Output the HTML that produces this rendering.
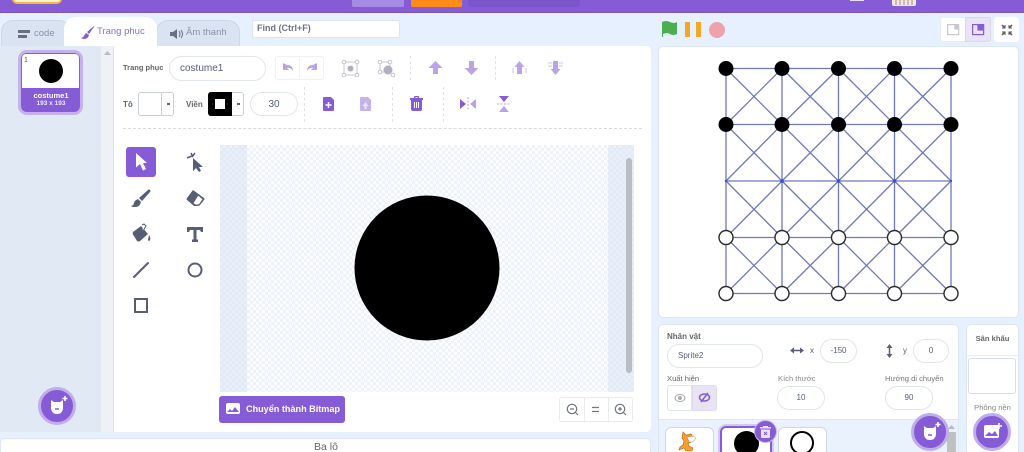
<!DOCTYPE html>
<html><head><meta charset="utf-8"><style>
html,body{margin:0;padding:0;width:1024px;height:452px;overflow:hidden;background:#e6f0ff}
#p{position:relative;width:1024px;height:452px;overflow:hidden;background:#e6f0ff;font-family:"Liberation Sans","Noto Sans CJK SC",sans-serif;color:#575e75}
.a{position:absolute;box-sizing:border-box}
.t{position:absolute;white-space:nowrap;line-height:1}
.inp{position:absolute;box-sizing:border-box;background:#fff;border:1px solid #e1e5ec;border-radius:16px;text-align:center;color:#575e75}
svg{position:absolute;overflow:visible}
</style></head><body><div id="p">
<div class="a" style="left:0;top:0;width:1024px;height:13px;background:#855cd6;border-bottom:1px solid #7a54c6"></div>
<div class="a" style="left:12px;top:-6px;width:50px;height:10px;background:#fff3d0;border:2px solid #f5b83c;border-radius:5px"></div>
<div class="a" style="left:352px;top:0;width:52px;height:7px;background:#a78ae2;border-radius:0 0 2px 2px"></div>
<div class="a" style="left:411px;top:0;width:51px;height:7px;background:#ff8c1a;border-radius:0 0 2px 2px"></div>
<div class="a" style="left:468px;top:0;width:112px;height:7px;background:#7d55cb;border-radius:0 0 3px 3px"></div>
<div class="a" style="left:892px;top:0;width:24px;height:6px;background:#f4e9e0;border-radius:0 0 2px 2px"></div>
<svg style="left:892px;top:0" width="24" height="6"><path d="M4 0v5M8 0v5M12 0v5M16 0v5M20 0v5" stroke="#a08a90"/></svg>
<div class="a" style="left:850px;top:0;width:14px;height:1px;background:#e8e0f8"></div>

<!-- tabs -->
<div class="a" style="left:1px;top:20px;width:70px;height:27px;background:#d9e3f2;border:1px solid #ccd8ea;border-radius:12px 12px 0 0"></div>
<div class="a" style="left:156px;top:20px;width:84px;height:27px;background:#d9e3f2;border:1px solid #ccd8ea;border-radius:12px 12px 0 0"></div>
<div class="a" style="left:64px;top:17px;width:93px;height:30px;background:#fff;border-radius:12px 12px 0 0"></div>
<svg style="left:18px;top:30px" width="13" height="9"><path d="M0 0h12v3H0zM0 5h9v3H0z" fill="#6a7080"/></svg>
<div class="t" style="left:34px;top:29px;font-size:9.500px;color:#8a92a5">code</div>
<svg style="left:81px;top:26px" width="14" height="14"><path d="M13 0L6 6l2 2 5-7zM5 7C3 8 4 11 0 12c3 2 7 1 8-3z" fill="#855cd6"/></svg>
<div class="t" style="left:97px;top:27px;font-size:9.500px;color:#8a6ed0">Trang phục</div>
<svg style="left:170px;top:29px" width="13" height="10"><path d="M0 3h3l4-3v10L3 7H0z" fill="#6a7080"/><path d="M9 2q2 3 0 6M11 1q3 4 0 8" stroke="#6a7080" fill="none"/></svg>
<div class="t" style="left:186px;top:28px;font-size:9.500px;color:#8a92a5">Âm thanh</div>
<div class="a" style="left:252px;top:20px;width:148px;height:18px;background:#fff;border:1px solid #dbe3ef;border-radius:2px"></div>
<div class="t" style="left:257px;top:24px;font-size:9px;font-weight:bold;color:#6b7285">Find (Ctrl+F)</div>

<!-- selector -->
<div class="a" style="left:0;top:46px;width:101px;height:386px;background:#e1e9f5"></div>
<div class="a" style="left:101px;top:46px;width:13px;height:386px;background:#eef1f6;border-right:1px solid #dde3ec"></div>
<svg style="left:104px;top:51px" width="7" height="5"><path d="M3.500 0L7 4H0z" fill="#b5bac4"/></svg>
<div class="a" style="left:18px;top:50px;width:65px;height:65px;background:#855cd6;border:3px solid #c5b2ec;border-radius:9px"></div>
<div class="a" style="left:22px;top:54px;width:57px;height:34px;background:#fff;border-radius:4px 4px 0 0"></div>
<div class="a" style="left:39px;top:59px;width:24px;height:24px;background:#000;border-radius:50%"></div>
<div class="t" style="left:24px;top:57px;font-size:7px;color:#555">1</div>
<div class="t" style="left:21px;top:92px;width:60px;text-align:center;font-size:7.500px;color:#fff;font-weight:bold">costume1</div>
<div class="t" style="left:21px;top:101px;width:60px;text-align:center;font-size:6.500px;color:#efe9fb;font-weight:bold">193 x 193</div>
<div class="a" style="left:38px;top:387px;width:38px;height:38px;background:#855cd6;border:3px solid #c0ade9;border-radius:50%"></div>
<svg style="left:50px;top:397px" width="24" height="20"><path d="M1 3l3 2h6l3-2v9q-1 5-6 5t-6-5z" fill="#fff"/><path d="M15-1v5M12.500 1.500h5" stroke="#fff" stroke-width="1.600"/><path d="M5 12h4" stroke="#855cd6" stroke-width="1.500"/></svg>

<!-- editor -->
<div class="a" style="left:114px;top:46px;width:537px;height:386px;background:#fff;border-radius:0 5px 5px 0"></div>
<div class="t" style="left:123px;top:64px;font-size:7.500px;font-weight:bold;color:#666">Trang phục</div>
<div class="inp" style="left:169px;top:56px;width:97px;height:25px;font-size:10px;line-height:23px;text-align:left;padding-left:10px">costume1</div>
<div class="a" style="left:275px;top:56px;width:49px;height:24px;border:1px solid #eef0f4;border-radius:3px"></div>
<div class="a" style="left:299px;top:56px;width:1px;height:24px;background:#eef0f4"></div>
<svg style="left:282px;top:63px" width="36" height="10"><path d="M1 0v7h6L5 5q3-1 6 3 0-6-6-6z" fill="#b9a5e6"/><path d="M35 0v7h-6l2-2q-3-1-6 3 0-6 6-6z" fill="#b9a5e6"/></svg>
<svg style="left:342px;top:60px" width="18" height="17" fill="none" stroke="#c4c4d2"><rect x="2" y="2" width="13" height="13"/><g fill="#fff"><circle cx="2" cy="2" r="1.800"/><circle cx="15" cy="2" r="1.800"/><circle cx="2" cy="15" r="1.800"/><circle cx="15" cy="15" r="1.800"/></g><circle cx="8.500" cy="8.500" r="3" fill="#b0b0c0" stroke="none"/></svg>
<svg style="left:378px;top:60px" width="18" height="17" fill="none" stroke="#c4c4d2"><path d="M2 2h10v4M2 2v10h4"/><circle cx="2" cy="2" r="1.800" fill="#fff"/><circle cx="12" cy="2" r="1.800" fill="#fff"/><circle cx="2" cy="12" r="1.800" fill="#fff"/><circle cx="15" cy="15" r="1.800" fill="#fff"/><circle cx="10" cy="10" r="4.500" fill="#b0b0c0" stroke="none"/></svg>
<div class="a" style="left:410px;top:56px;height:24px;border-left:1px dashed #e2e2e2"></div>
<div class="a" style="left:495px;top:56px;height:24px;border-left:1px dashed #e2e2e2"></div>
<svg style="left:428px;top:61px" width="15" height="14"><path d="M7.500 0l7 7H10v6H5V7H.5z" fill="#b9a5e6"/></svg>
<svg style="left:464px;top:61px" width="15" height="14"><path d="M7.500 14l-7-7H5V0h5v7h4.500z" fill="#b9a5e6"/></svg>
<svg style="left:512px;top:61px" width="15" height="14"><path d="M7.500 0l5 6H10v7H5V6H2.500z" fill="#b9a5e6"/><path d="M1 7v5M14 7v5" stroke="#cfc2ee"/></svg>
<svg style="left:548px;top:61px" width="15" height="14"><path d="M7.500 14l-5-6H5V0h5v8h2.500z" fill="#b9a5e6"/><path d="M0 2h4M0 5h4M11 2h4M11 5h4" stroke="#cfc2ee"/></svg>

<div class="t" style="left:123px;top:101px;font-size:8px;font-weight:bold;color:#666">Tô</div>
<div class="a" style="left:138px;top:92px;width:36px;height:24px;background:#fff;border:1px solid #c9ced8;border-radius:3px"></div>
<div class="a" style="left:161px;top:92px;width:1px;height:24px;background:#c9ced8"></div>
<div class="a" style="left:167px;top:103px;width:3px;height:2px;background:#666"></div>
<div class="t" style="left:186px;top:101px;font-size:8px;font-weight:bold;color:#666">Viền</div>
<div class="a" style="left:208px;top:92px;width:36px;height:24px;background:#fff;border:1px solid #c9ced8;border-radius:3px"></div>
<div class="a" style="left:208px;top:92px;width:24px;height:24px;background:#000;border-radius:3px 0 0 3px"></div>
<div class="a" style="left:215px;top:99px;width:10px;height:10px;background:#fff"></div>
<div class="a" style="left:237px;top:103px;width:3px;height:2px;background:#666"></div>
<div class="inp" style="left:250px;top:92px;width:48px;height:24px;font-size:10px;line-height:23px">30</div>
<div class="a" style="left:304px;top:87px;height:35px;border-left:1px dashed #e2e2e2"></div>
<div class="a" style="left:392px;top:87px;height:35px;border-left:1px dashed #e2e2e2"></div>
<div class="a" style="left:443px;top:87px;height:35px;border-left:1px dashed #e2e2e2"></div>
<svg style="left:323px;top:97px" width="12" height="14"><path d="M1 0h7l3 3v10q0 1-1 1H1q-1 0-1-1V1q0-1 1-1z" fill="#855cd6"/><path d="M5.500 5v6M2.500 8h6" stroke="#fff" stroke-width="1.500"/></svg>
<svg style="left:360px;top:97px" width="12" height="14"><path d="M1 0h7l3 3v10q0 1-1 1H1q-1 0-1-1V1q0-1 1-1z" fill="#c3b2ec"/><path d="M5.500 5l3 4-2 .5V12h-2V9.500l-2-.5z" fill="#fff" opacity=".6"/></svg>
<svg style="left:410px;top:96px" width="13" height="15"><path d="M4 2V1q0-1 1-1h3q1 0 1 1v1h4v2h-1v9q0 2-2 2H3q-2 0-2-2V4H0V2zm1.500 0h2V1h-2z" fill="#855cd6"/><path d="M4.500 6v6M6.500 6v6M8.500 6v6" stroke="#fff"/></svg>
<svg style="left:460px;top:97px" width="16" height="14"><path d="M0 2l6 5-6 5z" fill="#855cd6"/><path d="M16 2l-6 5 6 5z" fill="#b9a5e6"/><path d="M8 0v14" stroke="#b9a5e6" stroke-dasharray="2 1.500"/></svg>
<svg style="left:497px;top:96px" width="14" height="16"><path d="M2 0l5 6 5-6z" fill="#855cd6"/><path d="M2 16l5-6 5 6z" fill="#b9a5e6"/><path d="M0 8h14" stroke="#b9a5e6" stroke-dasharray="2 1.500"/></svg>
<div class="a" style="left:123px;top:128px;width:519px;border-top:1px dashed #d9d9d9"></div>

<!-- tools -->
<div class="a" style="left:126px;top:147px;width:30px;height:30px;background:#855cd6;border-radius:3px"></div>
<svg style="left:136px;top:153px" width="12" height="18"><path d="M0 0l11 10H7l3 6-3 1.500-3-6.500-4 3.500z" fill="#fff"/></svg>
<svg style="left:186px;top:152px" width="18" height="20"><path d="M7 6l10 9h-4l2 4-2 1-3-4-3 3z" fill="#575e75"/><path d="M1 6l5-2M5 1l2 4M9 1L6 5" stroke="#575e75" stroke-width="1.500"/></svg>
<svg style="left:131px;top:190px" width="20" height="18"><path d="M19 0q1 1 0 2l-8 9-3-3 9-8q1-1 2 0zM7 9l3 3q-1 5-6 5-3 0-4-1 3-1 3-3t4-4z" fill="#575e75"/></svg>
<svg style="left:186px;top:190px" width="19" height="17"><path d="M7 0l11 8q1 1 0 2l-4 5q-1 1-3 1H8L1 10Q0 9 1 8z" fill="#575e75"/><path d="M12 5l5 4-3.500 5.500q-1 .5-2.500.5H9L7 13z" fill="#fff" stroke="#575e75"/></svg>
<svg style="left:132px;top:224px" width="19" height="19"><path d="M1 8l8-6 7 8-8 7q-1 1-3 0L2 12Q0 10 1 8z" fill="#575e75"/><path d="M10 1l2-1 2 2-3 5" stroke="#575e75" fill="#fff"/><path d="M17 11q2 3 1 5t-2 0z" fill="#575e75"/></svg>
<svg style="left:187px;top:227px" width="16" height="15"><path d="M0 0h16v5h-2l-1-2H9.500v9.500H11V15H5v-2.500h1.500V3H3L2 5H0z" fill="#575e75"/></svg>
<svg style="left:133px;top:262px" width="16" height="16"><path d="M1 15L15 1" stroke="#575e75" stroke-width="2" stroke-linecap="round"/></svg>
<svg style="left:187px;top:262px" width="16" height="16"><circle cx="8" cy="8" r="6.500" fill="none" stroke="#575e75" stroke-width="2"/></svg>
<svg style="left:134px;top:298px" width="14" height="15"><rect x="1" y="1" width="12" height="13" fill="none" stroke="#575e75" stroke-width="2"/></svg>

<!-- canvas -->
<svg style="left:220px;top:145px" width="414" height="247">
<defs><pattern id="c" width="6" height="6" patternUnits="userSpaceOnUse"><rect width="6" height="6" fill="#fbfdff"/><rect width="3" height="3" fill="#eef3fb"/><rect x="3" y="3" width="3" height="3" fill="#eef3fb"/></pattern>
<pattern id="d" width="6" height="6" patternUnits="userSpaceOnUse"><rect width="6" height="6" fill="#e8eff9"/><rect width="3" height="3" fill="#e2eaf6"/><rect x="3" y="3" width="3" height="3" fill="#e2eaf6"/></pattern></defs>
<rect width="414" height="247" fill="url(#c)"/><rect width="27" height="247" fill="url(#d)"/><rect x="388" width="26" height="247" fill="url(#d)"/>
<circle cx="207" cy="123" r="72.500" fill="#000"/>
<rect x="406" y="13" width="6" height="215" rx="3" fill="#b9bcc2"/>
</svg>
<div class="a" style="left:219px;top:396px;width:126px;height:27px;background:#855cd6;border-radius:3px"></div>
<svg style="left:226px;top:403px" width="14" height="12"><rect width="14" height="11" rx="2" fill="#fff"/><path d="M1 9l3-3 2 2 3-4 4 5z" fill="#855cd6"/></svg>
<div class="t" style="left:246px;top:405px;font-size:9.100px;font-weight:bold;color:#fff">Chuyển thành Bitmap</div>
<div class="a" style="left:559px;top:397px;width:74px;height:25px;border:1px solid #e8eaee;border-radius:3px"></div>
<div class="a" style="left:584px;top:397px;width:1px;height:25px;background:#e8eaee"></div>
<div class="a" style="left:608px;top:397px;width:1px;height:25px;background:#e8eaee"></div>
<svg style="left:566px;top:403px" width="13" height="13" fill="none" stroke="#6f7585" stroke-width="1.200"><circle cx="6" cy="6" r="4.700"/><path d="M9.500 9.500L12 12M4 6h4"/></svg>
<svg style="left:591px;top:406px" width="9" height="7" stroke="#6f7585" stroke-width="1.300"><path d="M1 1.500h7M1 5.500h7"/></svg>
<svg style="left:614px;top:403px" width="13" height="13" fill="none" stroke="#6f7585" stroke-width="1.200"><circle cx="6" cy="6" r="4.700"/><path d="M9.500 9.500L12 12M4 6h4M6 4v4"/></svg>

<!-- backpack -->
<div class="a" style="left:0;top:438px;width:651px;height:20px;background:#fff;border:1px solid #dfe7f3;border-radius:5px 5px 0 0"></div>
<div class="t" style="left:314px;top:442px;font-size:10.500px;color:#666">Ba lô</div>

<!-- stage controls -->
<svg style="left:661px;top:21px" width="17" height="17"><path d="M1 1q4-2 8 0t7 0v12q-4 2-7 0t-7 0v3H1z" fill="#4cae4f"/></svg>
<div class="a" style="left:685px;top:22px;width:5px;height:15px;background:#f5a623"></div>
<div class="a" style="left:696px;top:22px;width:5px;height:15px;background:#f5a623"></div>
<div class="a" style="left:709px;top:22px;width:16px;height:16px;background:#eea2a9;border-radius:50%"></div>
<div class="a" style="left:940px;top:17px;width:26px;height:25px;background:#fff;border:1px solid #e8ecf3;border-radius:3px 0 0 3px"></div>
<div class="a" style="left:965px;top:17px;width:26px;height:25px;background:#e8e4f6;border:1px solid #dcd6ef;border-radius:0 3px 3px 0"></div>
<div class="a" style="left:994px;top:17px;width:25px;height:25px;background:#fff;border-radius:3px"></div>
<svg style="left:947px;top:24px" width="13" height="12" fill="none" stroke="#c6c8ce" stroke-width="1.200"><rect x=".6" y=".6" width="11" height="10"/><rect x="8" y="1" width="3.500" height="4" fill="#c6c8ce"/></svg>
<svg style="left:972px;top:24px" width="13" height="12" fill="none" stroke="#855cd6" stroke-width="1.200"><rect x=".6" y=".6" width="11" height="10"/><rect x="6" y="1" width="5.500" height="5" fill="#855cd6"/></svg>
<svg style="left:1001px;top:24px" width="12" height="12" fill="none" stroke="#555" stroke-width="1.500"><path d="M1 1l3 3M11 1L8 4M1 11l3-3M11 11L8 8"/><path d="M4 1v3H1M8 1v3h3M4 11V8H1M8 11V8h3" stroke-width="1"/></svg>

<!-- stage -->
<div class="a" style="left:658px;top:46px;width:361px;height:272px;background:#fff;border:1px solid #dde6f3;border-radius:5px"></div>
<svg style="left:0;top:0" width="1024" height="452">
<g stroke="#6f78ba" stroke-width="1.300" fill="none">
<path d="M726 68.500H951M726 124.500H951M726 181H951M726 237.500H951M726 293.500H951"/>
<path d="M726 68.500V293.500M782 68.500V293.500M838.500 68.500V293.500M894.500 68.500V293.500M951 68.500V293.500"/>
<path d="M726 68.500L782 124.500M782 68.500L726 124.500M782 68.500L838.500 124.500M838.500 68.500L782 124.500M838.500 68.500L894.500 124.500M894.500 68.500L838.500 124.500M894.500 68.500L951 124.500M951 68.500L894.500 124.500"/>
<path d="M726 124.500L782 181M782 124.500L726 181M782 124.500L838.500 181M838.500 124.500L782 181M838.500 124.500L894.500 181M894.500 124.500L838.500 181M894.500 124.500L951 181M951 124.500L894.500 181"/>
<path d="M726 181L782 237.500M782 181L726 237.500M782 181L838.500 237.500M838.500 181L782 237.500M838.500 181L894.500 237.500M894.500 181L838.500 237.500M894.500 181L951 237.500M951 181L894.500 237.500"/>
<path d="M726 237.500L782 293.500M782 237.500L726 293.500M782 237.500L838.500 293.500M838.500 237.500L782 293.500M838.500 237.500L894.500 293.500M894.500 237.500L838.500 293.500M894.500 237.500L951 293.500M951 237.500L894.500 293.500"/>
</g>
<g fill="#3f4fc4"><circle cx="726" cy="181" r="1.200"/><circle cx="782" cy="181" r="1.800"/><circle cx="838.500" cy="181" r="1.800"/><circle cx="894.500" cy="181" r="1.800"/><circle cx="951" cy="181" r="1.200"/></g>
<g fill="#000">
<circle cx="726" cy="68.500" r="7.500"/><circle cx="782" cy="68.500" r="7.500"/><circle cx="838.500" cy="68.500" r="7.500"/><circle cx="894.500" cy="68.500" r="7.500"/><circle cx="951" cy="68.500" r="7.500"/>
<circle cx="726" cy="124.500" r="7.500"/><circle cx="782" cy="124.500" r="7.500"/><circle cx="838.500" cy="124.500" r="7.500"/><circle cx="894.500" cy="124.500" r="7.500"/><circle cx="951" cy="124.500" r="7.500"/>
</g>
<g fill="#fff" stroke="#2a2a2a" stroke-width="1.400">
<circle cx="726" cy="237.500" r="7"/><circle cx="782" cy="237.500" r="7"/><circle cx="838.500" cy="237.500" r="7"/><circle cx="894.500" cy="237.500" r="7"/><circle cx="951" cy="237.500" r="7"/>
<circle cx="726" cy="293.500" r="7"/><circle cx="782" cy="293.500" r="7"/><circle cx="838.500" cy="293.500" r="7"/><circle cx="894.500" cy="293.500" r="7"/><circle cx="951" cy="293.500" r="7"/>
</g>
</svg>

<!-- sprite info -->
<div class="a" style="left:658px;top:324px;width:301px;height:134px;background:#fff;border:1px solid #dde6f3;border-radius:5px"></div>
<div class="a" style="left:659px;top:419px;width:299px;height:40px;background:#eaf2fe;border-top:1px solid #dbe4f1"></div>
<div class="t" style="left:667px;top:333px;font-size:8px;font-weight:bold;color:#666">Nhân vật</div>
<div class="inp" style="left:667px;top:344px;width:96px;height:24px;font-size:8px;line-height:22px;text-align:left;padding-left:10px">Sprite2</div>
<svg style="left:790px;top:347px" width="14" height="7"><path d="M2 3.500h10" stroke="#575e75" stroke-width="1.500"/><path d="M0 3.500L4 .5v6zM14 3.500L10 .5v6z" fill="#575e75"/></svg>
<div class="t" style="left:810px;top:347px;font-size:8px">x</div>
<div class="inp" style="left:820px;top:339px;width:37px;height:24px;font-size:8px;line-height:22px">-150</div>
<svg style="left:886px;top:344px" width="7" height="14"><path d="M3.500 2v10" stroke="#575e75" stroke-width="1.500"/><path d="M3.500 0L.5 4h6zM3.500 14L.5 10h6z" fill="#575e75"/></svg>
<div class="t" style="left:903px;top:347px;font-size:8px">y</div>
<div class="inp" style="left:913px;top:339px;width:36px;height:24px;font-size:8px;line-height:22px">0</div>
<div class="t" style="left:667px;top:375px;font-size:7.600px;color:#666">Xuất hiện</div>
<div class="t" style="left:778px;top:375px;font-size:7.600px;color:#888">Kích thước</div>
<div class="t" style="left:885px;top:375px;font-size:7.600px;color:#777">Hướng di chuyển</div>
<div class="a" style="left:667px;top:385px;width:25px;height:26px;background:#fff;border:1px solid #dfe3ea;border-radius:3px 0 0 3px"></div>
<div class="a" style="left:692px;top:385px;width:25px;height:26px;background:#e8e4f6;border:1px solid #dfdaf0;border-radius:0 3px 3px 0"></div>
<svg style="left:674px;top:394px" width="12" height="8" fill="none" stroke="#aaa"><ellipse cx="6" cy="4" rx="5" ry="3.500"/><circle cx="6" cy="4" r="1.500" fill="#aaa"/></svg>
<svg style="left:698px;top:392px" width="13" height="11" fill="none" stroke="#855cd6" stroke-width="1.500"><ellipse cx="6.500" cy="5.500" rx="5" ry="3.500"/><path d="M10 1L3 10"/></svg>
<div class="inp" style="left:777px;top:386px;width:48px;height:24px;font-size:8px;line-height:22px">10</div>
<div class="inp" style="left:885px;top:386px;width:48px;height:24px;font-size:8px;line-height:22px">90</div>

<!-- sprite tiles -->
<div class="a" style="left:665px;top:427px;width:49px;height:40px;background:#fff;border:1px solid #cdd6e4;border-radius:6px"></div>
<svg style="left:677px;top:431px" width="24" height="22"><path d="M6 1l3 3 5-1 1 1 0 5q-1 3-4 3l1 3 4 2-1 3H9L7 17l-5 2 1-3 3-2 1-4-2-3z" fill="#f59f2e" stroke="#a8650f" stroke-width=".6"/><path d="M10 6l7-1 2 2-3 4-4 0z" fill="#fff" stroke="#a8650f" stroke-width=".4"/></svg>
<div class="a" style="left:720px;top:426px;width:52px;height:40px;background:#fff;border:2px solid #855cd6;box-shadow:0 0 0 2px #d5c9f1;border-radius:6px"></div>
<div class="a" style="left:734px;top:431px;width:25px;height:25px;background:#000;border-radius:50%"></div>
<div class="a" style="left:778px;top:427px;width:49px;height:40px;background:#fff;border:1px solid #cdd6e4;border-radius:6px"></div>
<div class="a" style="left:790px;top:431px;width:24px;height:24px;background:#fff;border:2px solid #000;border-radius:50%"></div>
<div class="a" style="left:755px;top:421px;width:21px;height:21px;background:#855cd6;border-radius:50%;box-shadow:0 0 0 1px #c9b9ee"></div>
<svg style="left:760px;top:425px" width="11" height="13"><path d="M3 2V1h5v1h3v1.500H0V2zM1 4.500h9V12q0 1-1 1H2q-1 0-1-1z" fill="#e9e1f9"/><path d="M4 7l3 3M7 7l-3 3" stroke="#855cd6"/></svg>
<div class="a" style="left:947px;top:432px;width:9px;height:20px;background:#c0c0c0"></div>
<svg style="left:948px;top:425px" width="7" height="5"><path d="M3.500 0L7 4H0z" fill="#b5bac4"/></svg>
<div class="a" style="left:911px;top:413px;width:38px;height:38px;background:#855cd6;border:3px solid #c0ade9;border-radius:50%"></div>
<svg style="left:923px;top:423px" width="24" height="20"><path d="M1 3l3 2h6l3-2v9q-1 5-6 5t-6-5z" fill="#fff"/><path d="M15-1v5M12.500 1.500h5" stroke="#fff" stroke-width="1.600"/><path d="M5 12h4" stroke="#855cd6" stroke-width="1.500"/></svg>

<!-- stage panel -->
<div class="a" style="left:966px;top:324px;width:53px;height:134px;background:#fff;border:1px solid #dde6f3;border-radius:5px"></div>
<div class="a" style="left:966px;top:355px;width:53px;height:1px;background:#e8edf5"></div>
<div class="t" style="left:966px;top:335px;width:53px;text-align:center;font-size:7.600px;font-weight:bold;color:#666">Sân khấu</div>
<div class="a" style="left:968px;top:358px;width:48px;height:36px;background:#fff;border:1px solid #d8deea;border-radius:3px"></div>
<div class="t" style="left:966px;top:404px;width:53px;text-align:center;font-size:7.600px;color:#888">Phông nền</div>
<div class="a" style="left:973px;top:413px;width:38px;height:38px;background:#855cd6;border:3px solid #c0ade9;border-radius:50%"></div>
<svg style="left:984px;top:423px" width="20" height="17"><rect y="2" width="15" height="13" rx="2" fill="#fff"/><path d="M1 13l4-4 3 2 3-3 3 5z" fill="#855cd6"/><path d="M15 0v6M12 3h6" stroke="#fff" stroke-width="1.600"/></svg>
</div></body></html>
